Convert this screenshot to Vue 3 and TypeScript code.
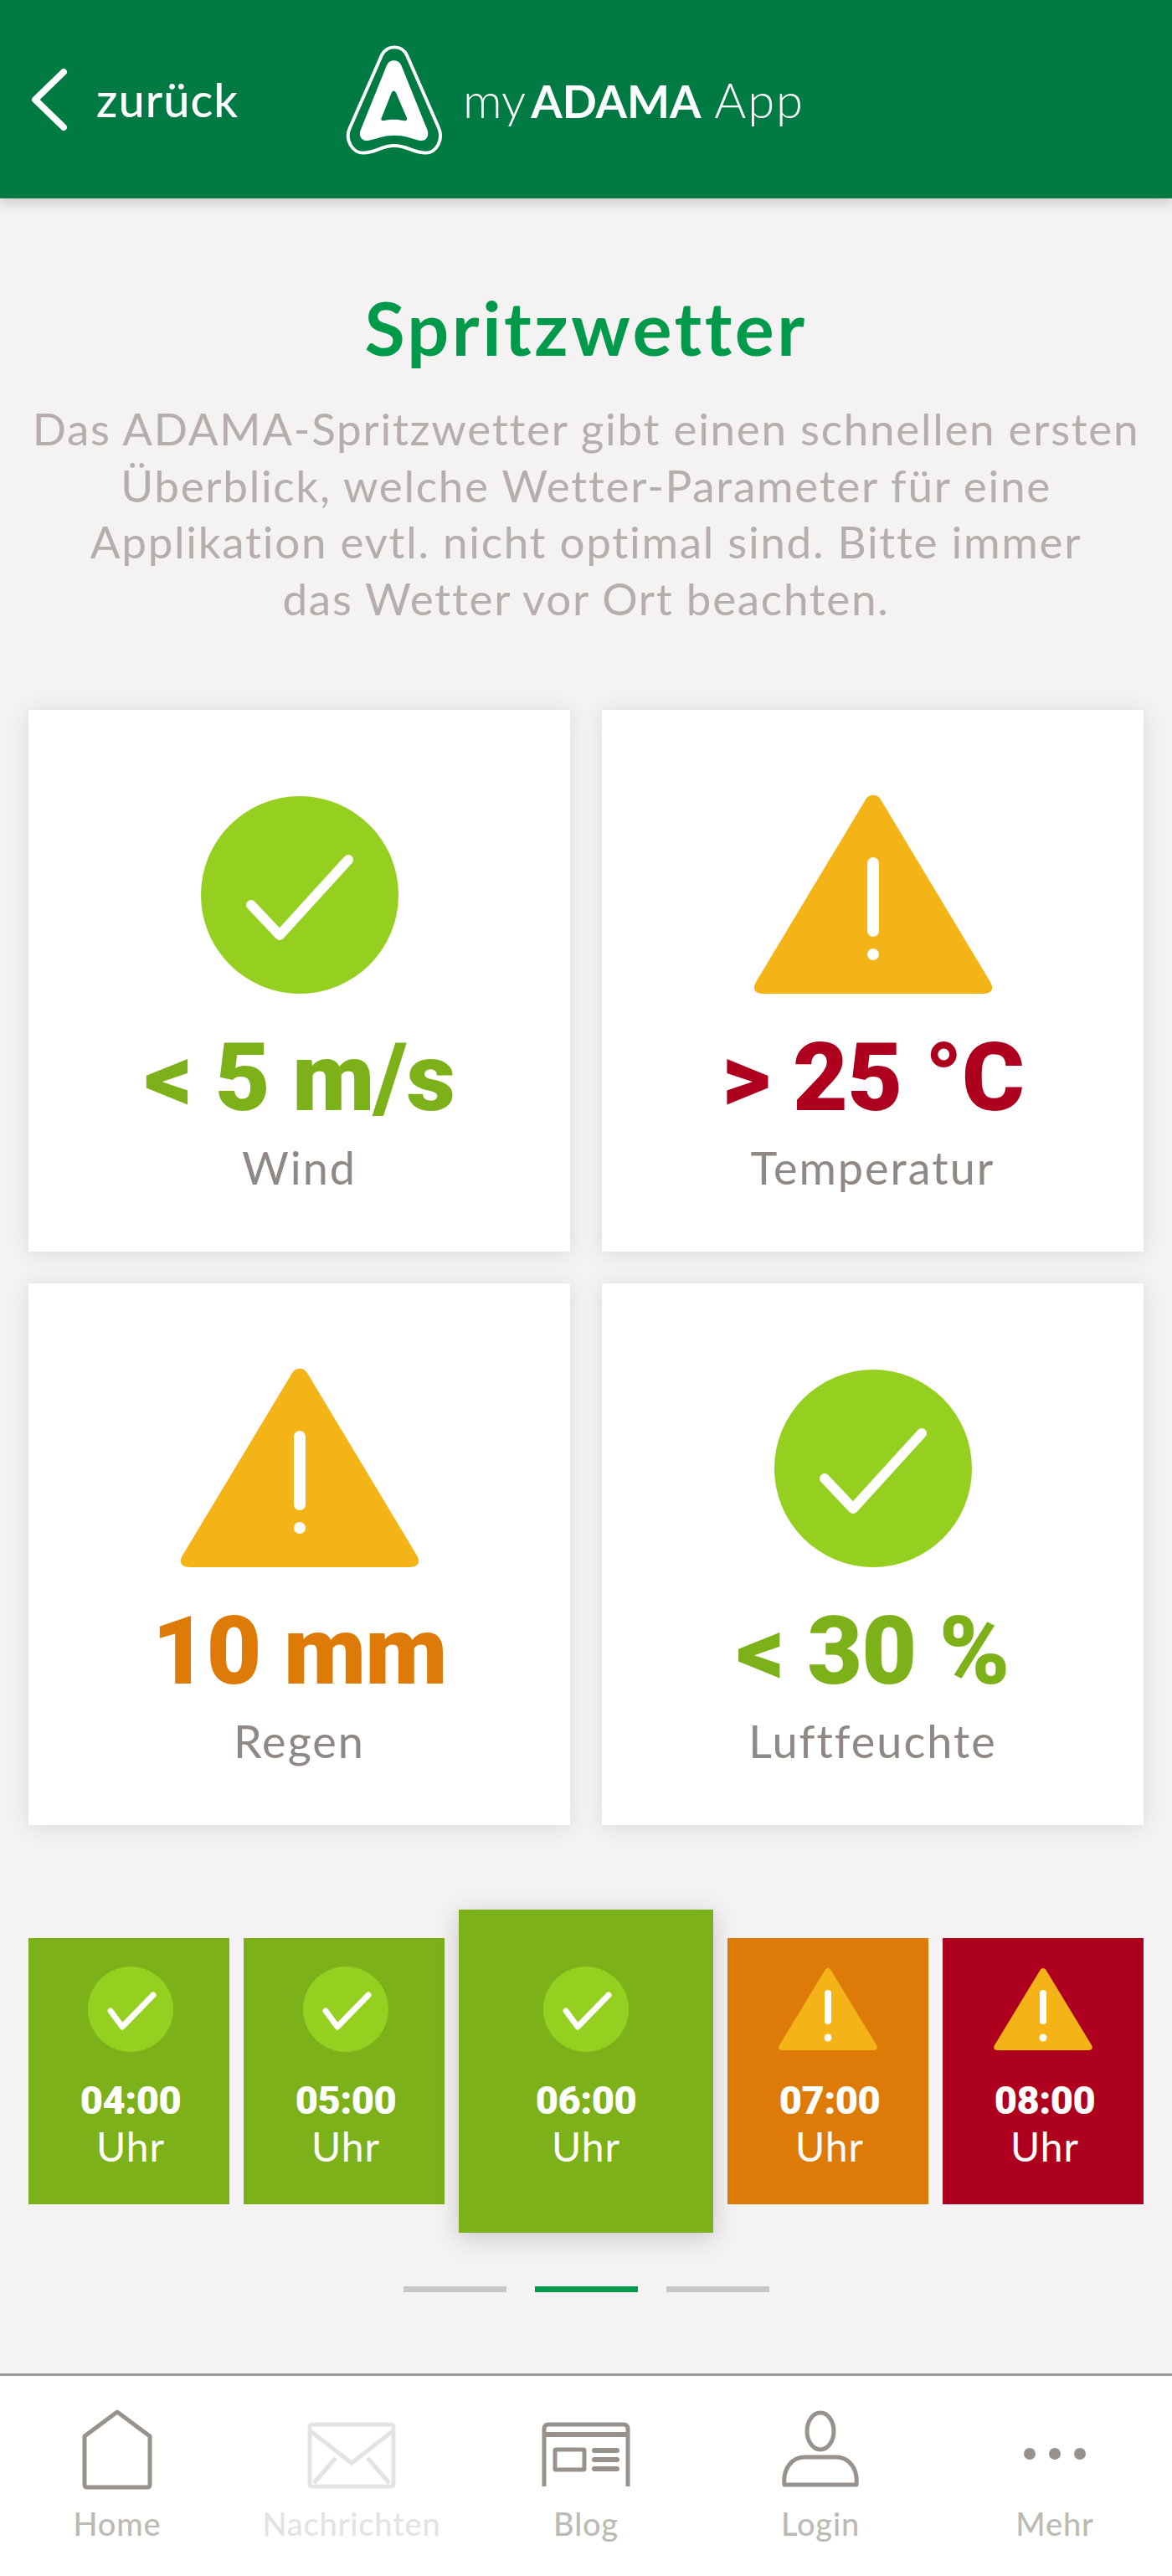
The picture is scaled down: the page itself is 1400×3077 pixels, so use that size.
<template>
  <div class="page">
    <header class="app-header">
      <div class="back">
        <svg class="chevron" viewBox="0 0 45 76" fill="none">
          <path d="M40 5 L6 38 L40 71" stroke="#fff" stroke-width="8" stroke-linecap="round" stroke-linejoin="round" />
        </svg>
        <span>zurück</span>
      </div>
      <svg class="logo" viewBox="90 60 364 410">
        <path
          d="M226 105 C245 65 300 65 318 105 L432 365 C452 410 425 458 385 458 C340 458 320 432 272 432 C225 432 205 458 160 458 C120 458 90 410 112 365 Z"
          fill="none"
          stroke="#fff"
          stroke-width="12"
        />
        <path
          fill="#fff"
          fill-rule="evenodd"
          d="M245 140 C255 118 285 118 297 140 L392 375 C400 400 385 418 362 413 C330 405 310 395 272 395 C235 395 215 405 180 413 C158 418 140 400 150 375 Z M262 240 C266 232 274 232 278 240 L317 330 C320 340 315 343 305 341 C290 338 280 337 270 337 C258 337 248 338 235 341 C226 343 222 338 226 330 Z"
        />
      </svg>
      <div class="brand">my<b>ADAMA</b> <span class="brand-app">App</span></div>
    </header>

    <main class="content">
      <h1 class="title">Spritzwetter</h1>
      <p class="intro">
        Das ADAMA-Spritzwetter gibt einen schnellen ersten<br />
        Überblick, welche Wetter-Parameter für eine<br />
        Applikation evtl. nicht optimal sind. Bitte immer<br />
        das Wetter vor Ort beachten.
      </p>

      <section class="cards">
        <div v-for="card in cards" :key="card.label" class="card">
          <svg v-if="card.ok" class="card-icon" viewBox="0 0 290 240">
            <circle cx="145" cy="120" r="118" fill="#95d021" />
            <path d="M87 132 L121 168 L203 78" fill="none" stroke="#fff" stroke-width="12" stroke-linecap="round" stroke-linejoin="round" />
          </svg>
          <svg v-else class="card-icon" viewBox="0 0 290 240">
            <path d="M136 6 C140 -1 150 -1 154 6 L285 224 C290 233 286 238 276 238 L14 238 C4 238 0 233 5 224 Z" fill="#f4b317" />
            <rect x="138" y="75" width="14" height="95" rx="7" fill="#fff" />
            <circle cx="145" cy="191" r="7" fill="#fff" />
          </svg>
          <div class="card-value" :style="{ color: card.color }">{{ card.value }}</div>
          <div class="card-label">{{ card.label }}</div>
        </div>
      </section>

      <section class="strip">
        <div
          v-for="hour in hours"
          :key="hour.time"
          class="tile"
          :class="{ active: hour.active }"
          :style="{ background: hour.color }"
        >
          <svg v-if="hour.ok" class="tile-icon tile-ok" viewBox="0 0 118 102">
            <circle cx="59" cy="51" r="51" fill="#95d021" />
            <path d="M35 53 L49 72 L86 34" fill="none" stroke="#fff" stroke-width="7" stroke-linecap="round" stroke-linejoin="round" />
          </svg>
          <svg v-else class="tile-icon" viewBox="0 0 118 102">
            <path d="M55 5 C57 1 61 1 63 5 L117 94 C119 98 117 100 113 100 L5 100 C1 100 -1 98 1 94 Z" fill="#f4b317" />
            <rect x="55" y="28" width="8" height="41" rx="4" fill="#fff" />
            <circle cx="59" cy="85" r="4.500" fill="#fff" />
          </svg>
          <div class="tile-time">{{ hour.time }}</div>
          <div class="tile-unit">Uhr</div>
        </div>
      </section>

      <div class="pager">
        <span class="dash"></span>
        <span class="dash current"></span>
        <span class="dash"></span>
      </div>
    </main>

    <nav class="tabbar">
      <div v-for="tab in tabs" :key="tab.label" class="tab" :class="{ disabled: tab.disabled }">
        <svg class="tab-icon" viewBox="0 0 110 96" fill="none" :stroke="tab.disabled ? '#e4e3e2' : '#98918c'" stroke-width="5">
          <template v-if="tab.icon === 'home'">
            <path d="M55 3 L94 32 L94 90 C94 92 93 93 91 93 L19 93 C17 93 16 92 16 90 L16 32 Z" stroke-linejoin="round" />
          </template>
          <template v-else-if="tab.icon === 'mail'">
            <rect x="5" y="18" width="100" height="74" rx="3" />
            <path d="M6 26 L55 64 L104 26 M10 88 L36 58 M100 88 L74 58" />
          </template>
          <template v-else-if="tab.icon === 'blog'">
            <path d="M5 92 L5 23 C5 20 7 18 10 18 L100 18 C103 18 105 20 105 23 L105 92" />
            <path d="M5 30 L105 30" stroke-width="6" />
            <rect x="18" y="48" width="35" height="24" rx="1" stroke-width="5" />
            <path d="M65 49 L92 49 M65 60 L92 60 M65 71 L92 71" stroke-width="6" stroke-linecap="round" />
          </template>
          <template v-else-if="tab.icon === 'user'">
            <ellipse cx="55" cy="26" rx="16" ry="22" />
            <path d="M12 90 L98 90 C100 72 90 57 74 57 L36 57 C20 57 10 72 12 90 Z" stroke-linejoin="round" />
          </template>
          <template v-else>
            <circle cx="25" cy="53" r="7" fill="#98918c" stroke="none" />
            <circle cx="55" cy="53" r="7" fill="#98918c" stroke="none" />
            <circle cx="85" cy="53" r="7" fill="#98918c" stroke="none" />
          </template>
        </svg>
        <span class="tab-label">{{ tab.label }}</span>
      </div>
    </nav>
  </div>
</template>

<script setup lang="ts">
interface WeatherCard {
  label: string
  value: string
  color: string
  ok: boolean
}

interface HourTile {
  time: string
  color: string
  ok: boolean
  active?: boolean
}

interface Tab {
  label: string
  icon: string
  disabled?: boolean
}

const GREEN = '#7cb11a'
const ORANGE = '#de7b08'
const RED = '#ae001e'

const cards: WeatherCard[] = [
  { label: 'Wind', value: '< 5 m/s', color: GREEN, ok: true },
  { label: 'Temperatur', value: '> 25 °C', color: RED, ok: false },
  { label: 'Regen', value: '10 mm', color: ORANGE, ok: false },
  { label: 'Luftfeuchte', value: '< 30 %', color: GREEN, ok: true }
]

const hours: HourTile[] = [
  { time: '04:00', color: GREEN, ok: true },
  { time: '05:00', color: GREEN, ok: true },
  { time: '06:00', color: GREEN, ok: true, active: true },
  { time: '07:00', color: ORANGE, ok: false },
  { time: '08:00', color: RED, ok: false }
]

const tabs: Tab[] = [
  { label: 'Home', icon: 'home' },
  { label: 'Nachrichten', icon: 'mail', disabled: true },
  { label: 'Blog', icon: 'blog' },
  { label: 'Login', icon: 'user' },
  { label: 'Mehr', icon: 'more' }
]
</script>

<style scoped>
.page {
  display: flex;
  flex-direction: column;
  height: 3077px;
  background: #f4f2f3;
  font-family: Lato, "Liberation Sans", sans-serif;
  overflow: hidden;
}
.app-header {
  display: flex;
  align-items: center;
  height: 237px;
  flex-shrink: 0;
  background: #007a43;
  color: #fff;
  box-shadow: 0 6px 14px rgba(0, 0, 0, 0.16);
  position: relative;
}
.back {
  display: flex;
  align-items: center;
  width: 411px;
  padding-left: 36px;
  box-sizing: border-box;
  font-size: 56px;
  letter-spacing: 1px;
  font-weight: 500;
}
.chevron {
  width: 45px;
  height: 76px;
  margin-right: 34px;
}
.logo {
  width: 120px;
  height: 136px;
  margin-right: 22px;
}
.brand {
  font-size: 58px;
  font-weight: 300;
}
.brand b {
  margin-left: 6px;
  font-size: 54px;
  font-weight: 700;
}
.brand-app {
  letter-spacing: 2px;
}
.content {
  flex: 1;
  padding: 0 34px;
}
.title {
  margin: 103px 0 0;
  text-align: center;
  font-size: 88px;
  letter-spacing: 3.500px;
  line-height: 102px;
  font-weight: 700;
  color: #009a4a;
}
.intro {
  margin: 36px 0 0;
  text-align: center;
  font-size: 53px;
  letter-spacing: 1.700px;
  line-height: 67.500px;
  color: #b5aeaa;
}
.cards {
  display: grid;
  grid-template-columns: 647px 647px;
  gap: 38px;
  margin-top: 100px;
}
.card {
  display: flex;
  flex-direction: column;
  align-items: center;
  height: 647px;
  padding-top: 101px;
  box-sizing: border-box;
  background: #fff;
  box-shadow: 0 2px 24px rgba(0, 0, 0, 0.1);
}
.card-icon {
  width: 290px;
  height: 240px;
}
.card-value {
  margin-top: 38px;
  font-family: Roboto, "Liberation Sans", sans-serif;
  font-size: 114px;
  letter-spacing: -1px;
  line-height: 120px;
  font-weight: 900;
  white-space: pre;
}
.card-label {
  margin-top: 18px;
  font-size: 54px;
  letter-spacing: 2px;
  line-height: 60px;
  color: #8f8884;
}
.strip {
  display: flex;
  align-items: center;
  gap: 17px;
  margin-top: 101px;
}
.tile {
  display: flex;
  flex-direction: column;
  align-items: center;
  width: 240px;
  height: 318px;
  padding-top: 34px;
  box-sizing: border-box;
  color: #fff;
}
.tile.active {
  width: 304px;
  height: 386px;
  padding-top: 68px;
  box-shadow: 0 6px 28px rgba(0, 0, 0, 0.18);
}
.tile-icon {
  width: 118px;
  height: 102px;
}
.tile:not(.active) .tile-ok,
.tile:not(.active) .tile-time,
.tile:not(.active) .tile-unit {
  margin-left: 4px;
}
.tile-time {
  margin-top: 30px;
  font-family: Roboto, "Liberation Sans", sans-serif;
  font-size: 47px;
  letter-spacing: -0.500px;
  line-height: 56px;
  font-weight: 900;
}
.tile-unit {
  font-size: 48px;
  letter-spacing: 1px;
  line-height: 54px;
}
.pager {
  display: flex;
  justify-content: center;
  gap: 34px;
  margin-top: 64px;
}
.dash {
  width: 123px;
  height: 7px;
  background: #c8c7c5;
}
.dash.current {
  background: #009a4a;
}
.tabbar {
  display: grid;
  grid-template-columns: repeat(5, 280px);
  height: 242px;
  flex-shrink: 0;
  box-sizing: border-box;
  padding-top: 40px;
  background: #fff;
  border-top: 3px solid #9f9a96;
}
.tab {
  display: flex;
  flex-direction: column;
  align-items: center;
}
.tab-icon {
  width: 110px;
  height: 96px;
}
.tab-label {
  margin-top: 18px;
  font-size: 38px;
  letter-spacing: 0.800px;
  line-height: 44px;
  font-weight: 500;
  color: #bdbab6;
}
.tab.disabled .tab-label {
  color: #e4e3e2;
}
</style>
